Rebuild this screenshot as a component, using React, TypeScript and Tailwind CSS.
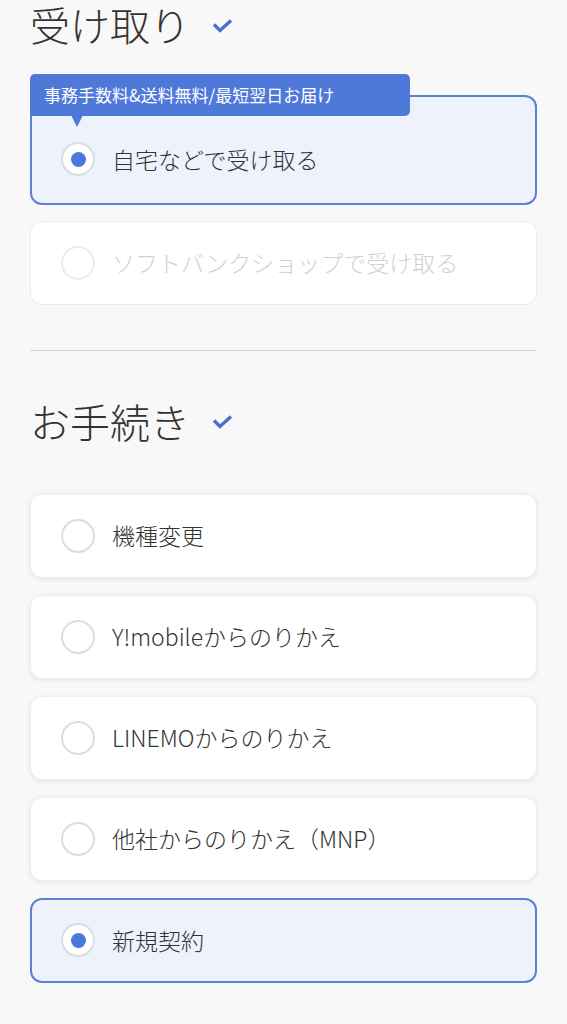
import React from "react";

const FONT = { fontFamily: '"Noto Sans CJK JP", "Noto Sans", sans-serif' };

function Check() {
  return (
    <svg width="21" height="15" viewBox="0 0 21 15" className="text-[#4a6fd3]">
      <path d="M2 6.5 L8 12.5 L19 2.5" fill="none" stroke="currentColor" strokeWidth="3.4" strokeLinejoin="miter" />
    </svg>
  );
}

function Title({ children }: { children: React.ReactNode }) {
  return (
    <div className="flex items-center h-[48px]">
      <h2 className="text-[40px] leading-[48px] text-[#333] font-light">{children}</h2>
      <span className="ml-[22px] mt-[2px]">
        <Check />
      </span>
    </div>
  );
}

function Radio({ checked, disabled }: { checked?: boolean; disabled?: boolean }) {
  return (
    <span
      className={
        "shrink-0 w-[34px] h-[34px] rounded-full border-2 bg-white flex items-center justify-center " +
        (disabled ? "border-[#ececec]" : "border-[#dadde2]")
      }
    >
      {checked && <span className="w-[15px] h-[15px] rounded-full bg-[#4a78dc]" />}
    </span>
  );
}

function Option({ label, checked, disabled }: { label: string; checked?: boolean; disabled?: boolean }) {
  if (checked) {
    return (
      <div className="h-[85px] rounded-[12px] border-2 border-[#5b80d6] bg-[#edf2fc] flex items-center pl-[29px] gap-[17px]">
        <Radio checked />
        <span className="text-[23px] font-light text-[#333]">{label}</span>
      </div>
    );
  }
  return (
    <div
      className={
        "h-[84px] rounded-[12px] border bg-white flex items-center pl-[30px] gap-[17px] " +
        (disabled ? "border-[#ebebeb]" : "border-[#efefef] shadow-[0_1px_5px_rgba(0,0,0,0.09)]")
      }
    >
      <Radio disabled={disabled} />
      <span className={"text-[23px] font-light " + (disabled ? "text-[#d2d2d2]" : "text-[#333]")}>{label}</span>
    </div>
  );
}

export default function App() {
  return (
    <div className="min-h-[1024px] bg-[#f8f8f8] px-[30px]" style={FONT}>
      <Title>受け取り</Title>

      <div className="relative mt-[47px] rounded-[12px] border-2 border-[#5b80d6] bg-[#edf2fc] pl-[29px] pt-[45px] pb-[26px] flex items-center gap-[17px]">
        <div className="absolute -left-[2px] -top-[23px] w-[380px] h-[42px] bg-[#4f79d9] rounded-t-[5px] rounded-br-[5px] flex items-center pl-[14px] text-[17px] text-white">
          事務手数料&amp;送料無料/最短翌日お届け
          <span className="absolute left-[41px] top-[41px] w-0 h-0 border-l-[6px] border-r-[6px] border-t-[12px] border-l-transparent border-r-transparent border-t-[#4f79d9]" />
        </div>
        <Radio checked />
        <span className="text-[23px] font-light text-[#333]">自宅などで受け取る</span>
      </div>

      <div className="mt-[16px]">
        <Option label="ソフトバンクショップで受け取る" disabled />
      </div>

      <div className="mt-[45px] h-px bg-[#d6d6d6]" />

      <div className="mt-[46px]">
        <Title>お手続き</Title>
      </div>

      <div className="mt-[49px] flex flex-col gap-[17px]">
        <Option label="機種変更" />
        <Option label="Y!mobileからのりかえ" />
        <Option label="LINEMOからのりかえ" />
        <Option label="他社からのりかえ（MNP）" />
        <Option label="新規契約" checked />
      </div>
    </div>
  );
}
